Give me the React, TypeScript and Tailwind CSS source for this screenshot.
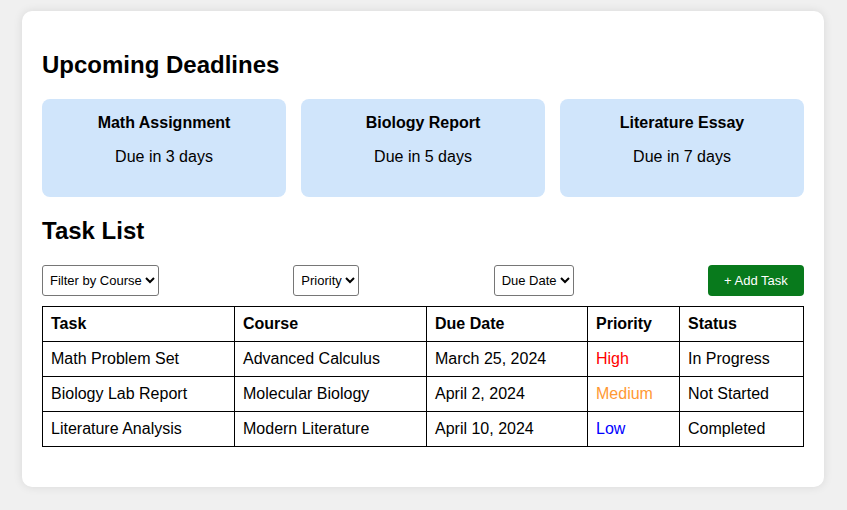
import React from "react";

interface Deadline {
  title: string;
  due: string;
}

interface Task {
  name: string;
  course: string;
  date: string;
  priority: "High" | "Medium" | "Low";
  status: string;
}

const deadlines: Deadline[] = [
  { title: "Math Assignment", due: "Due in 3 days" },
  { title: "Biology Report", due: "Due in 5 days" },
  { title: "Literature Essay", due: "Due in 7 days" },
];

const tasks: Task[] = [
  { name: "Math Problem Set", course: "Advanced Calculus", date: "March 25, 2024", priority: "High", status: "In Progress" },
  { name: "Biology Lab Report", course: "Molecular Biology", date: "April 2, 2024", priority: "Medium", status: "Not Started" },
  { name: "Literature Analysis", course: "Modern Literature", date: "April 10, 2024", priority: "Low", status: "Completed" },
];

const priorityColor = {
  High: "text-[#ff0000]",
  Medium: "text-[#ff9933]",
  Low: "text-[#0000ff]",
};

const selectCls =
  "h-[31px] rounded-[3px] border border-[#767676] bg-white pl-[3px] pr-0 font-['Liberation_Sans',Arial,sans-serif] text-[13px] text-black";

export default function App() {
  return (
    <div className="min-h-[510px] bg-[#f0f0f0] pt-[11px] pb-4 font-['Liberation_Sans',Arial,sans-serif] text-black">
      <div className="ml-[22px] w-[802px] rounded-[10px] bg-white p-5 shadow-[0_0_10px_rgba(0,0,0,0.1)]">
        <h2 className="my-5 text-2xl leading-[27.6px] font-bold">Upcoming Deadlines</h2>

        <div className="flex gap-[15px]">
          {deadlines.map((d) => (
            <div key={d.title} className="flex-1 rounded-lg bg-[#d0e5fb] p-[15px] text-center">
              <h3 className="text-base leading-[18.4px] font-bold">{d.title}</h3>
              <p className="my-4 text-base leading-[18.4px]">{d.due}</p>
            </div>
          ))}
        </div>

        <h2 className="my-5 text-2xl leading-[27.6px] font-bold">Task List</h2>

        <div className="mb-[10px] flex items-center justify-between">
          <select className={selectCls}>
            <option>Filter by Course</option>
          </select>
          <select className={selectCls}>
            <option>Priority</option>
          </select>
          <select className={selectCls}>
            <option>Due Date</option>
          </select>
          <button className="h-[31px] w-[96px] rounded-[4px] bg-[#087a1c] font-['Liberation_Sans',Arial,sans-serif] text-[13px] text-white">
            + Add Task
          </button>
        </div>

        <table className="mb-5 w-full border-collapse text-base leading-[18px]">
          <thead>
            <tr>
              <th className="w-[192px] border border-black p-2 text-left font-bold">Task</th>
              <th className="w-[192px] border border-black p-2 text-left font-bold">Course</th>
              <th className="w-[161px] border border-black p-2 text-left font-bold">Due Date</th>
              <th className="w-[92px] border border-black p-2 text-left font-bold">Priority</th>
              <th className="border border-black p-2 text-left font-bold">Status</th>
            </tr>
          </thead>
          <tbody>
            {tasks.map((t) => (
              <tr key={t.name}>
                <td className="border border-black p-2">{t.name}</td>
                <td className="border border-black p-2">{t.course}</td>
                <td className="border border-black p-2">{t.date}</td>
                <td className={`border border-black p-2 ${priorityColor[t.priority]}`}>{t.priority}</td>
                <td className="border border-black p-2">{t.status}</td>
              </tr>
            ))}
          </tbody>
        </table>
      </div>
    </div>
  );
}
